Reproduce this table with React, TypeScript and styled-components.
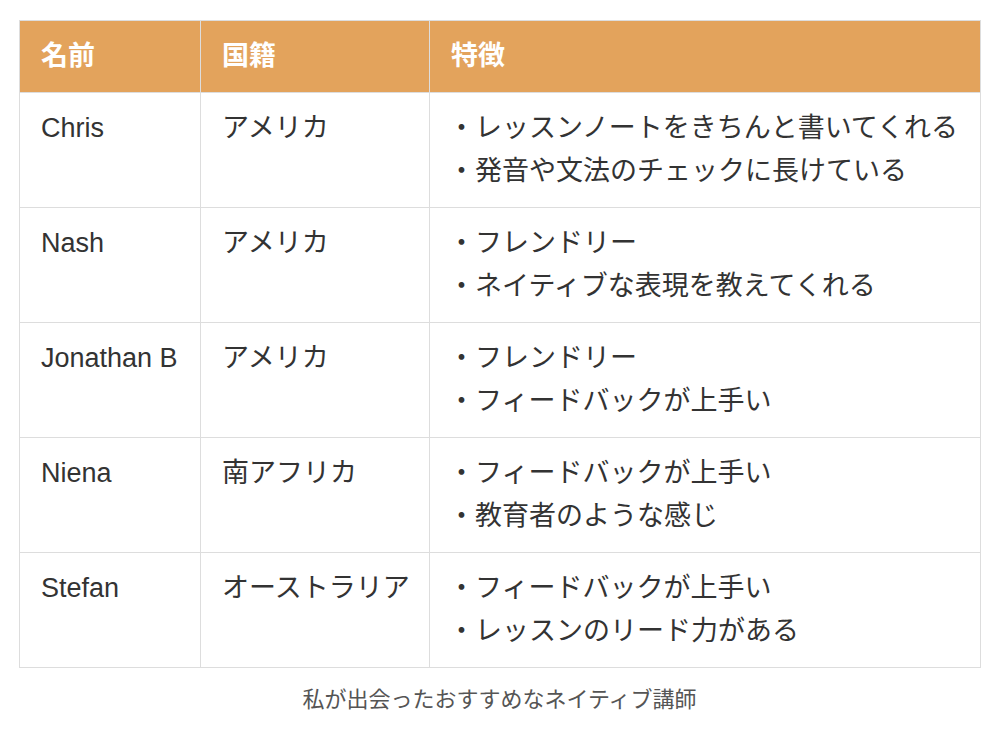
import styled, { createGlobalStyle } from "styled-components";

const Global = createGlobalStyle`
  body {
    margin: 0;
    background: #ffffff;
    font-family: "Liberation Sans", "Noto Sans CJK JP", sans-serif;
    color: #333333;
  }
`;

const Page = styled.div`
  padding: 20px 28px 0 19px;
`;

const Figure = styled.figure`
  margin: 0;
`;

const Table = styled.table`
  width: 961px;
  border-collapse: collapse;
  table-layout: fixed;
  font-size: 27px;
  line-height: 43px;
`;

const Th = styled.th<{ $w: number }>`
  box-sizing: border-box;
  width: ${(p) => p.$w}px;
  background: #e3a35c;
  color: #ffffff;
  font-weight: bold;
  text-align: left;
  padding: 14px 21px;
  border: 1px solid #dddddd;
`;

const Td = styled.td`
  vertical-align: top;
  padding: 14px 21px;
  border: 1px solid #dddddd;
  white-space: nowrap;
`;

const FeatureCell = styled(Td)`
  padding-left: 18px;
`;

const Line = styled.div`
  display: block;
`;

const Caption = styled.figcaption`
  width: 961px;
  text-align: center;
  font-size: 22px;
  line-height: 32px;
  color: #555555;
  margin-top: 16px;
`;

const rows = [
  { name: "Chris", country: "アメリカ", points: ["レッスンノートをきちんと書いてくれる", "発音や文法のチェックに長けている"] },
  { name: "Nash", country: "アメリカ", points: ["フレンドリー", "ネイティブな表現を教えてくれる"] },
  { name: "Jonathan B", country: "アメリカ", points: ["フレンドリー", "フィードバックが上手い"] },
  { name: "Niena", country: "南アフリカ", points: ["フィードバックが上手い", "教育者のような感じ"] },
  { name: "Stefan", country: "オーストラリア", points: ["フィードバックが上手い", "レッスンのリード力がある"] },
];

export default function App() {
  return (
    <Page>
      <Global />
      <Figure>
        <Table>
          <thead>
            <tr>
              <Th $w={181}>名前</Th>
              <Th $w={229}>国籍</Th>
              <Th $w={551}>特徴</Th>
            </tr>
          </thead>
          <tbody>
            {rows.map((r) => (
              <tr key={r.name}>
                <Td>{r.name}</Td>
                <Td>{r.country}</Td>
                <FeatureCell>
                  {r.points.map((p) => (
                    <Line key={p}>・{p}</Line>
                  ))}
                </FeatureCell>
              </tr>
            ))}
          </tbody>
        </Table>
        <Caption>私が出会ったおすすめなネイティブ講師</Caption>
      </Figure>
    </Page>
  );
}
